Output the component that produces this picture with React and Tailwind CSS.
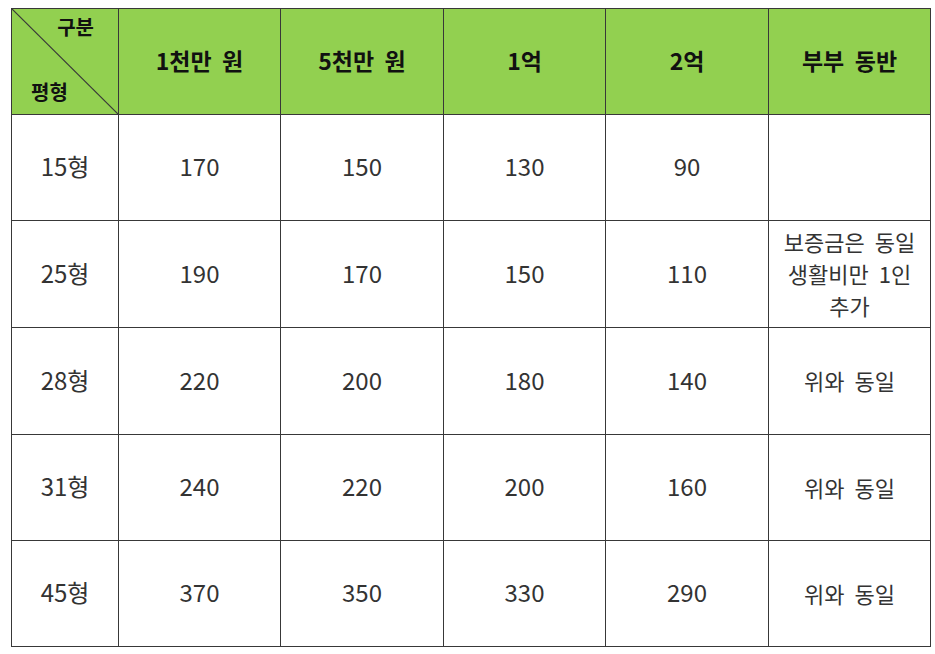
import React from "react";

const cols = ["1천만  원", "5천만  원", "1억", "2억", "부부  동반"];

const rows = [
  { size: "15형", vals: ["170", "150", "130", "90"], note: [], h: "h-[106px]" },
  { size: "25형", vals: ["190", "170", "150", "110"], note: ["보증금은  동일", "생활비만  1인", "추가"], h: "h-[107px]" },
  { size: "28형", vals: ["220", "200", "180", "140"], note: ["위와  동일"], h: "h-[107px]" },
  { size: "31형", vals: ["240", "220", "200", "160"], note: ["위와  동일"], h: "h-[106px]" },
  { size: "45형", vals: ["370", "350", "330", "290"], note: ["위와  동일"], h: "h-[106px]" },
];

const font = { fontFamily: '"Noto Sans CJK KR", "Noto Sans", sans-serif' };

export default function App() {
  return (
    <div className="w-[935px] h-[654px] bg-white pl-[11px] pt-[8px]" style={font}>
      <div className="w-[920px] border-l border-t border-[#383838] grid grid-cols-[107px_162px_163px_162px_163px_162px]">
        {/* header */}
        <div className="relative h-[106px] bg-[#92d050] border-r border-b border-[#383838]">
          <svg className="absolute inset-0 w-full h-full" preserveAspectRatio="none" viewBox="0 0 106 105">
            <line x1="0" y1="0" x2="106" y2="105" stroke="#383838" strokeWidth="1.2" />
          </svg>
          <span className="absolute right-[24px] top-[8px] leading-none text-[20px] font-bold text-[#111]">구분</span>
          <span className="absolute left-[19px] bottom-[12px] leading-none text-[20px] font-bold text-[#111]">평형</span>
        </div>
        {cols.map((c) => (
          <div
            key={c}
            className="h-[106px] bg-[#92d050] border-r border-b border-[#383838] flex items-center justify-center pb-[3px] text-[23px] leading-none font-bold text-[#111] whitespace-pre"
          >
            {c}
          </div>
        ))}

        {/* body */}
        {rows.map((r) => (
          <React.Fragment key={r.size}>
            <div className={`${r.h} border-r border-b border-[#383838] flex items-center justify-center pb-[3px] text-[24px] leading-none text-[#333]`}>
              {r.size}
            </div>
            {r.vals.map((v, i) => (
              <div
                key={i}
                className={`${r.h} border-r border-b border-[#383838] flex items-center justify-center pb-[3px] text-[24px] leading-none text-[#333]`}
              >
                {v}
              </div>
            ))}
            <div className={`${r.h} border-r border-b border-[#383838] flex flex-col items-center justify-center pb-[2px] text-[22px] leading-[32px] text-[#333]`}>
              {r.note.map((n) => (
                <span key={n} className="whitespace-pre">{n}</span>
              ))}
            </div>
          </React.Fragment>
        ))}
      </div>
    </div>
  );
}
